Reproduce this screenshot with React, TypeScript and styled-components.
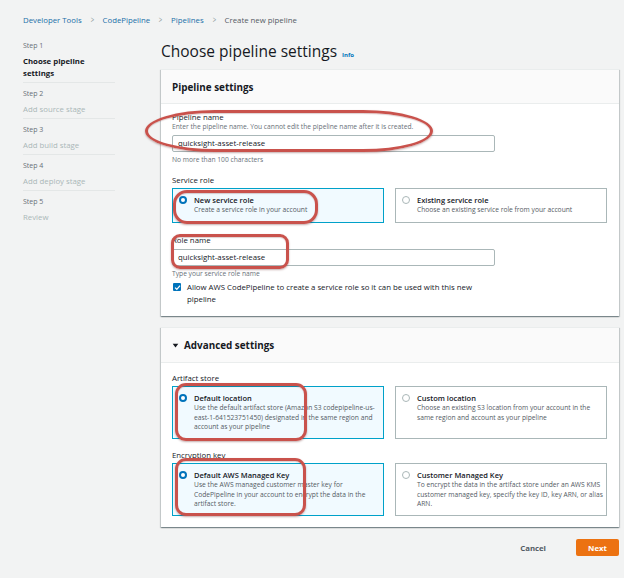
import React from "react";
import styled, { createGlobalStyle } from "styled-components";

const GlobalStyle = createGlobalStyle`
  html, body {
    margin: 0;
    padding: 0;
    background: #f2f3f3;
  }
  body {
    font-family: "Open Sans", "Liberation Sans", Arial, sans-serif;
    color: #16191f;
  }
  * { box-sizing: border-box; }
`;

interface Mark {
  left: number;
  top: number;
  width: number;
  height: number;
  radius: string;
}

// red review marks drawn over the form
const marks: Mark[] = [
  { left: 145, top: 110, width: 288, height: 42, radius: "70px / 21px" },
  { left: 173, top: 190, width: 145, height: 34, radius: "14px" },
  { left: 171, top: 234, width: 118, height: 35, radius: "9px" },
  { left: 175, top: 383, width: 132, height: 58, radius: "11px" },
  { left: 175, top: 458, width: 131, height: 58, radius: "11px" },
];

export default function App() {
  return (
    <Page>
      <GlobalStyle />
      <Breadcrumbs>
        <Crumb>Developer Tools</Crumb>
        <Sep>&gt;</Sep>
        <Crumb>CodePipeline</Crumb>
        <Sep>&gt;</Sep>
        <Crumb>Pipelines</Crumb>
        <Sep>&gt;</Sep>
        <Current>Create new pipeline</Current>
      </Breadcrumbs>
      <Layout>
        <Nav>
          <NavStep>
            <StepNo>Step 1</StepNo>
            <StepTitle $active>Choose pipeline settings</StepTitle>
          </NavStep>
          <NavStep>
            <StepNo>Step 2</StepNo>
            <StepTitle>Add source stage</StepTitle>
          </NavStep>
          <NavStep>
            <StepNo>Step 3</StepNo>
            <StepTitle>Add build stage</StepTitle>
          </NavStep>
          <NavStep>
            <StepNo>Step 4</StepNo>
            <StepTitle>Add deploy stage</StepTitle>
          </NavStep>
          <NavStep $last>
            <StepNo>Step 5</StepNo>
            <StepTitle>Review</StepTitle>
          </NavStep>
        </Nav>
        <Main>
          <Heading>
            Choose pipeline settings <Info>Info</Info>
          </Heading>
          <Panel>
            <PanelHeader>Pipeline settings</PanelHeader>
            <PanelBody $top={8}>
              <Field>
                <Label>Pipeline name</Label>
                <Description>
                  Enter the pipeline name. You cannot edit the pipeline name after it is created.
                </Description>
                <Input>quicksight-asset-release</Input>
                <Hint>No more than 100 characters</Hint>
              </Field>
              <Field $mt={11}>
                <Label>Service role</Label>
                <Tiles>
                  <Tile $selected $h={35}>
                    <Radio $checked />
                    <div>
                      <TileTitle>New service role</TileTitle>
                      <TileText>Create a service role in your account</TileText>
                    </div>
                  </Tile>
                  <Tile $h={35}>
                    <Radio />
                    <div>
                      <TileTitle>Existing service role</TileTitle>
                      <TileText>Choose an existing service role from your account</TileText>
                    </div>
                  </Tile>
                </Tiles>
              </Field>
              <Field $mt={12}>
                <Label>Role name</Label>
                <Input>quicksight-asset-release</Input>
                <Hint>Type your service role name</Hint>
                <CheckRow>
                  <Checkbox>
                    <svg width="7" height="7" viewBox="0 0 10 10">
                      <path d="M1.5 5.2 L4 7.6 L8.6 2.4" fill="none" stroke="#fff" strokeWidth="1.8" />
                    </svg>
                  </Checkbox>
                  <CheckText>
                    Allow AWS CodePipeline to create a service role so it can be used with this new
                    pipeline
                  </CheckText>
                </CheckRow>
              </Field>
            </PanelBody>
          </Panel>
          <Panel>
            <PanelHeader $tall>
              <Caret viewBox="0 0 10 10">
                <path d="M1 2.5 L9 2.5 L5 8 Z" fill="#16191f" />
              </Caret>
              Advanced settings
            </PanelHeader>
            <PanelBody $top={10}>
              <Field>
                <Label>Artifact store</Label>
                <Tiles>
                  <Tile $selected $h={53}>
                    <Radio $checked />
                    <div>
                      <TileTitle>Default location</TileTitle>
                      <TileText>
                        Use the default artifact store (Amazon S3 codepipeline-us-east-1-641523751450)
                        designated in the same region and account as your pipeline
                      </TileText>
                    </div>
                  </Tile>
                  <Tile $h={53}>
                    <Radio />
                    <div>
                      <TileTitle>Custom location</TileTitle>
                      <TileText>
                        Choose an existing S3 location from your account in the same region and
                        account as your pipeline
                      </TileText>
                    </div>
                  </Tile>
                </Tiles>
              </Field>
              <Field $mt={11}>
                <Label>Encryption key</Label>
                <Tiles>
                  <Tile $selected $h={53}>
                    <Radio $checked />
                    <div>
                      <TileTitle>Default AWS Managed Key</TileTitle>
                      <TileText>
                        Use the AWS managed customer master key for CodePipeline in your account to
                        encrypt the data in the artifact store.
                      </TileText>
                    </div>
                  </Tile>
                  <Tile $h={53}>
                    <Radio />
                    <div>
                      <TileTitle>Customer Managed Key</TileTitle>
                      <TileText>
                        To encrypt the data in the artifact store under an AWS KMS customer managed
                        key, specify the key ID, key ARN, or alias ARN.
                      </TileText>
                    </div>
                  </Tile>
                </Tiles>
              </Field>
            </PanelBody>
          </Panel>
          <Actions>
            <CancelButton>Cancel</CancelButton>
            <NextButton>Next</NextButton>
          </Actions>
        </Main>
      </Layout>
      {marks.map((m, i) => (
        <Annotation
          key={i}
          style={{ left: m.left, top: m.top, width: m.width, height: m.height, borderRadius: m.radius }}
        />
      ))}
    </Page>
  );
}

const Page = styled.div`
  position: relative;
  width: 624px;
  height: 578px;
  overflow: hidden;
  padding: 15px 5px 0 23px;
`;

const Breadcrumbs = styled.div`
  display: flex;
  align-items: center;
  gap: 8px;
  font-size: 7.8px;
  line-height: 10px;
  height: 10px;
`;

const Crumb = styled.span`
  color: #1a6fa8;
`;

const Sep = styled.span`
  color: #879596;
  font-size: 8.5px;
  transform: scaleX(0.7);
`;

const Current = styled.span`
  color: #545b64;
`;

const Layout = styled.div`
  display: grid;
  grid-template-columns: 138px 458px;
  margin-top: 16px;
`;

const Nav = styled.nav`
  display: flex;
  flex-direction: column;
  width: 92px;
`;

const NavStep = styled.div<{ $last?: boolean }>`
  padding-bottom: ${({ $last }) => ($last ? 0 : 3)}px;
  margin-bottom: 6px;
  border-bottom: ${({ $last }) => ($last ? "none" : "1px solid #e4e7e7")};
`;

const StepNo = styled.div`
  font-size: 7px;
  line-height: 10px;
  color: #687078;
  margin-bottom: 4px;
`;

const StepTitle = styled.div<{ $active?: boolean }>`
  font-size: 7.8px;
  line-height: 12px;
  font-weight: ${({ $active }) => ($active ? 700 : 400)};
  color: ${({ $active }) => ($active ? "#16191f" : "#aab7b8")};
`;

const Main = styled.main`
  display: flex;
  flex-direction: column;
`;

const Heading = styled.h1`
  margin: 0;
  font-size: 15.5px;
  line-height: 20px;
  font-weight: 400;
  color: #16191f;
  height: 28px;
`;

const Info = styled.span`
  font-size: 6px;
  font-weight: 700;
  color: #0073bb;
  margin-left: 1px;
`;

const Panel = styled.section`
  background: #fff;
  box-shadow: 0 1px 1px 0 rgba(0, 28, 36, 0.3), 1px 1px 1px 0 rgba(0, 28, 36, 0.15),
    -1px 1px 1px 0 rgba(0, 28, 36, 0.15);
  border-top: 1px solid #eaeded;
  margin-bottom: 11px;
`;

const PanelHeader = styled.div<{ $tall?: boolean }>`
  display: flex;
  align-items: center;
  gap: 5px;
  height: ${({ $tall }) => ($tall ? 35 : 34)}px;
  padding: 0 11px;
  background: #fafafa;
  border-bottom: 1px solid #eaeded;
  font-size: 9.9px;
  font-weight: 700;
  color: #16191f;
`;

const Caret = styled.svg`
  width: 7px;
  height: 7px;
`;

const PanelBody = styled.div<{ $top: number }>`
  display: flex;
  flex-direction: column;
  padding: ${({ $top }) => $top}px 12px 11px 11px;
`;

const Field = styled.div<{ $mt?: number }>`
  display: flex;
  flex-direction: column;
  margin-top: ${({ $mt }) => $mt ?? 0}px;
`;

const Label = styled.div`
  font-size: 7.8px;
  line-height: 10px;
  color: #16191f;
`;

const Description = styled.div`
  font-size: 6.7px;
  line-height: 9px;
  color: #687078;
`;

const Input = styled.div`
  width: 323px;
  height: 17px;
  margin-top: 4px;
  border: 1px solid #aab7b8;
  border-radius: 2px;
  background: #fff;
  padding: 0 5px;
  font-size: 7.8px;
  line-height: 15px;
  color: #16191f;
`;

const Hint = styled.div`
  font-size: 6.7px;
  line-height: 9px;
  color: #687078;
  margin-top: 3px;
`;

const Tiles = styled.div`
  display: grid;
  grid-template-columns: 212px 212px;
  gap: 11px;
  margin-top: 3px;
`;

const Tile = styled.div<{ $selected?: boolean; $h: number }>`
  display: flex;
  align-items: flex-start;
  gap: 7px;
  height: ${({ $h }) => $h}px;
  padding: 6px 2px 0 6px;
  background: ${({ $selected }) => ($selected ? "#f1faff" : "#fff")};
  border: 1px solid ${({ $selected }) => ($selected ? "#00a1c9" : "#aab7b8")};
`;

const Radio = styled.span<{ $checked?: boolean }>`
  flex: none;
  width: 8px;
  height: 8px;
  margin-top: 1px;
  border-radius: 50%;
  background: #fff;
  border: ${({ $checked }) => ($checked ? "2.5px solid #0073bb" : "1px solid #aab7b8")};
`;

const TileTitle = styled.div`
  font-size: 7.5px;
  line-height: 10px;
  font-weight: 600;
  color: #16191f;
`;

const TileText = styled.div`
  font-size: 6.7px;
  line-height: 9.5px;
  color: #545b64;
`;

const CheckRow = styled.div`
  display: flex;
  align-items: flex-start;
  gap: 6px;
  margin-top: 3px;
  width: 315px;
`;

const Checkbox = styled.span`
  flex: none;
  display: flex;
  align-items: center;
  justify-content: center;
  width: 8px;
  height: 8px;
  margin-top: 2px;
  margin-left: 1px;
  border-radius: 1px;
  background: #0073bb;
`;

const CheckText = styled.div`
  font-size: 7.8px;
  line-height: 12px;
  color: #16191f;
`;

const Actions = styled.div`
  display: flex;
  justify-content: flex-end;
  align-items: center;
  gap: 30px;
  margin-top: 1px;
`;

const CancelButton = styled.span`
  font-size: 7.8px;
  font-weight: 700;
  color: #545b64;
`;

const NextButton = styled.span`
  display: flex;
  align-items: center;
  justify-content: center;
  width: 43px;
  height: 17px;
  border-radius: 2px;
  background: #ec7211;
  color: #fff;
  font-size: 7.8px;
  font-weight: 700;
`;

const Annotation = styled.div`
  position: absolute;
  border: 3px solid #c9524c;
  box-shadow: 0 1px 2px rgba(90, 20, 20, 0.35), inset 0 1px 1px rgba(90, 20, 20, 0.2);
  pointer-events: none;
`;
